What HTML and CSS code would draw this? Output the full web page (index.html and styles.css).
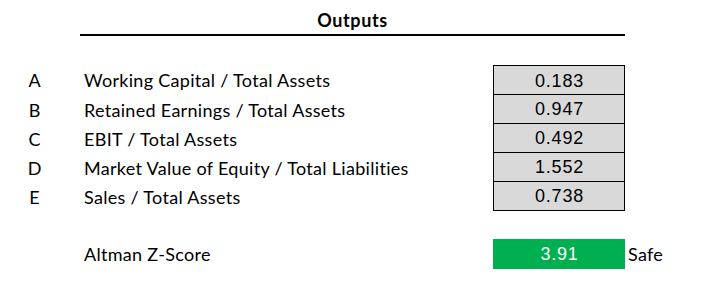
FILE: index.html
```html
<!DOCTYPE html>
<html lang="en">
<head>
<meta charset="utf-8">
<title>Outputs</title>
<link rel="stylesheet" href="styles.css">
</head>
<body>
<div class="sheet">
  <div class="title-row">
    <div class="title">Outputs</div>
  </div>
  <div class="ratios">
    <div class="row first">
      <span class="letter">A</span>
      <span class="label">Working Capital / Total Assets</span>
      <span class="value">0.183</span>
    </div>
    <div class="row">
      <span class="letter">B</span>
      <span class="label">Retained Earnings / Total Assets</span>
      <span class="value">0.947</span>
    </div>
    <div class="row">
      <span class="letter">C</span>
      <span class="label">EBIT / Total Assets</span>
      <span class="value">0.492</span>
    </div>
    <div class="row">
      <span class="letter">D</span>
      <span class="label">Market Value of Equity / Total Liabilities</span>
      <span class="value">1.552</span>
    </div>
    <div class="row">
      <span class="letter">E</span>
      <span class="label">Sales / Total Assets</span>
      <span class="value">0.738</span>
    </div>
  </div>
  <div class="row score-row">
    <span class="letter"></span>
    <span class="label">Altman Z-Score</span>
    <span class="score">3.91</span>
    <span class="status">Safe</span>
  </div>
</div>
</body>
</html>
```

FILE: styles.css
```css
html, body {
  margin: 0;
  padding: 0;
  background: #ffffff;
}

body {
  font-family: "Lato", "Liberation Sans", sans-serif;
  color: #000000;
}

.sheet {
  width: 705px;
  height: 291px;
  padding-top: 7px;
  box-sizing: border-box;
}

.title-row {
  margin-left: 80px;
  width: 545px;
  height: 29px;
  box-sizing: border-box;
  border-bottom: 2px solid #000000;
  display: flex;
  align-items: center;
  justify-content: center;
}

.title {
  font-weight: 700;
  font-size: 18px;
  letter-spacing: 0.6px;
  line-height: 20px;
  padding-bottom: 2px;
}

.ratios {
  margin-top: 29px;
  display: flex;
  flex-direction: column;
}

.row {
  display: flex;
  align-items: center;
  height: 29px;
}

.letter {
  width: 69px;
  text-align: center;
  font-size: 18px;
}

.label {
  width: 409px;
  margin-left: 15px;
  font-size: 18px;
  letter-spacing: 0.3px;
}

.value {
  box-sizing: border-box;
  width: 132px;
  height: 29px;
  border: 1px solid #000000;
  border-top: none;
  background: #d9d9d9;
  display: flex;
  align-items: center;
  justify-content: center;
  font-family: "Liberation Sans", Arial, sans-serif;
  font-size: 18px;
  letter-spacing: 0.8px;
  padding-top: 1px;
  padding-left: 1px;
}

.row.first {
  height: 30px;
}

.row.first .value {
  height: 30px;
  border-top: 1px solid #000000;
  padding-top: 2px;
}

.score-row {
  margin-top: 28px;
  height: 30px;
}

.score {
  width: 132px;
  height: 30px;
  background: #00b050;
  color: #ffffff;
  display: flex;
  align-items: center;
  justify-content: center;
  font-family: "Liberation Sans", Arial, sans-serif;
  font-size: 18px;
  letter-spacing: 0.8px;
  padding-top: 1px;
  padding-left: 1px;
  box-sizing: border-box;
}

.status {
  margin-left: 3px;
  font-size: 18px;
  letter-spacing: 0.3px;
}
```
